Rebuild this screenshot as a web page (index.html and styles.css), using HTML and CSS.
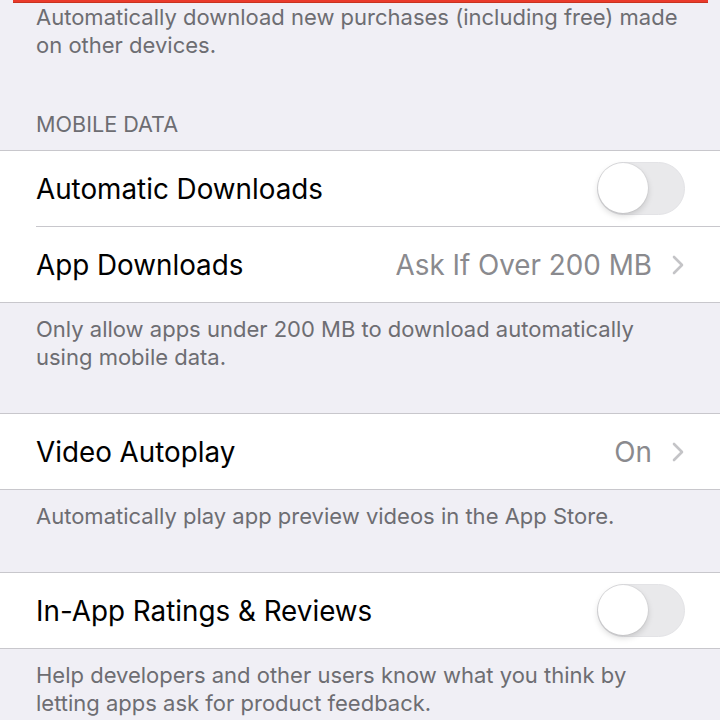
FILE: index.html
```html
<!DOCTYPE html>
<html lang="en">
<head>
    <meta charset="UTF-8">
    <meta name="viewport" content="width=device-width, initial-scale=1.0">
    <title>App Store Settings</title>
    <link rel="stylesheet" href="styles.css">
</head>
<body>

<div class="highlight"></div>

<p class="group-footer first">
    Automatically download new purchases (including free) made on other devices.
</p>

<div class="group-header">MOBILE DATA</div>
<div class="group">
    <div class="row">
        <span class="label">Automatic Downloads</span>
        <span class="toggle"></span>
    </div>
    <div class="row">
        <span class="label">App Downloads</span>
        <span class="value">Ask If Over 200 MB</span>
        <svg class="chevron" viewBox="0 0 12 20" width="12" height="20">
            <path d="M2 2 L10 10 L2 18" fill="none" stroke="#c4c4c7" stroke-width="2.6" stroke-linecap="round" stroke-linejoin="round"/>
        </svg>
    </div>
</div>
<p class="group-footer">
    Only allow apps under 200 MB to download automatically using mobile data.
</p>

<div class="group">
    <div class="row">
        <span class="label">Video Autoplay</span>
        <span class="value">On</span>
        <svg class="chevron" viewBox="0 0 12 20" width="12" height="20">
            <path d="M2 2 L10 10 L2 18" fill="none" stroke="#c4c4c7" stroke-width="2.6" stroke-linecap="round" stroke-linejoin="round"/>
        </svg>
    </div>
</div>
<p class="group-footer">
    Automatically play app preview videos in the App Store.
</p>

<div class="group">
    <div class="row">
        <span class="label">In-App Ratings &amp; Reviews</span>
        <span class="toggle"></span>
    </div>
</div>
<p class="group-footer">
    Help developers and other users know what you think by letting apps ask for product feedback.
</p>

</body>
</html>
```

FILE: styles.css
```css
body {
    margin: 0;
    background-color: #f0eff5;
    font-family: Inter, "Noto Sans", sans-serif;
    overflow: hidden;
}
.highlight {
    height: 3px;
    margin: 0 12px 0 13px;
    background-color: #ea3a2b;
    border-bottom: 1px solid #c8321f;
    box-sizing: border-box;
}
.group-footer {
    margin: 0;
    padding: 12px 36px 42px 36px;
    font-size: 22px;
    line-height: 28px;
    color: #6d6d72;
}
.group-footer.first {
    padding-top: 0;
    padding-bottom: 51px;
}
.group-header {
    padding: 0 36px 12px 36px;
    font-size: 21.6px;
    line-height: 28px;
    color: #6d6d72;
}
.group {
    background-color: #fff;
    border-top: 1px solid #c8c7cc;
    border-bottom: 1px solid #c8c7cc;
}
.row {
    display: flex;
    align-items: center;
    height: 75px;
    margin-left: 36px;
    padding-right: 36px;
}
.row + .row {
    border-top: 1px solid #c8c7cc;
}
.label {
    flex: 1;
    font-size: 27.8px;
    color: #000;
}
.value {
    font-size: 27.8px;
    color: #8a8a8e;
    margin-right: 20px;
}
.chevron {
    display: block;
}
.toggle {
    position: relative;
    width: 88px;
    height: 53px;
    border-radius: 27px;
    background-color: #e9e9eb;
    box-sizing: border-box;
    border: 1.5px solid #e3e3e6;
    margin-right: -1px;
}
.toggle::after {
    content: "";
    position: absolute;
    top: 0;
    left: 0;
    width: 50px;
    height: 50px;
    border-radius: 50%;
    background-color: #fff;
    box-shadow: 0 3px 6px rgba(0, 0, 0, 0.15), 0 0 0 1px rgba(0, 0, 0, 0.04);
}
```
